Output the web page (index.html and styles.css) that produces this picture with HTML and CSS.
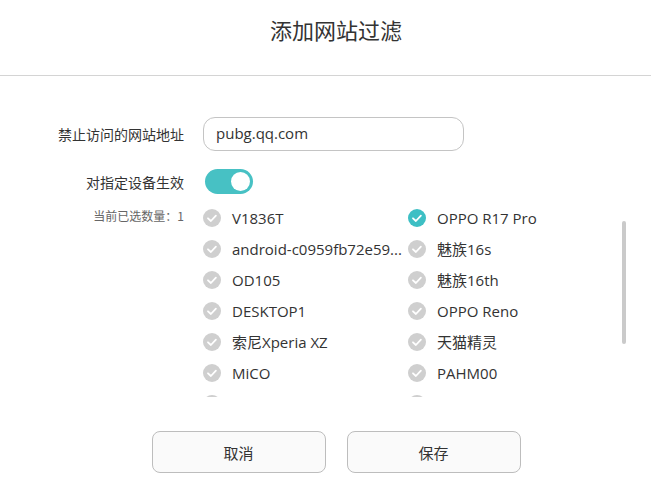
FILE: index.html
```html
<!DOCTYPE html>
<html lang="zh-CN">
<head>
<meta charset="utf-8">
<title>添加网站过滤</title>
<link rel="stylesheet" href="styles.css">
</head>
<body>
<div class="dialog">
  <header class="head"><h1 class="title">添加网站过滤</h1></header>
  <div class="form">
    <label class="label">禁止访问的网站地址</label>
    <div class="field"><div class="input">pubg.qq.com</div></div>

    <label class="label">对指定设备生效</label>
    <div class="field"><span class="switch"><span class="knob"></span></span></div>

    <div class="label small">当前已选数量：1</div>
    <div class="listwrap">
      <div class="list">
        <div class="item"><svg class="chk" viewBox="0 0 18 18"><circle cx="9" cy="9" r="9"/><path d="M5 9.3l2.9 2.7 5-5.4"/></svg><span>V1836T</span></div>
        <div class="item"><svg class="chk on" viewBox="0 0 18 18"><circle cx="9" cy="9" r="9"/><path d="M5 9.3l2.9 2.7 5-5.4"/></svg><span>OPPO R17 Pro</span></div>
        <div class="item"><svg class="chk" viewBox="0 0 18 18"><circle cx="9" cy="9" r="9"/><path d="M5 9.3l2.9 2.7 5-5.4"/></svg><span>android-c0959fb72e59...</span></div>
        <div class="item"><svg class="chk" viewBox="0 0 18 18"><circle cx="9" cy="9" r="9"/><path d="M5 9.3l2.9 2.7 5-5.4"/></svg><span>魅族16s</span></div>
        <div class="item"><svg class="chk" viewBox="0 0 18 18"><circle cx="9" cy="9" r="9"/><path d="M5 9.3l2.9 2.7 5-5.4"/></svg><span>OD105</span></div>
        <div class="item"><svg class="chk" viewBox="0 0 18 18"><circle cx="9" cy="9" r="9"/><path d="M5 9.3l2.9 2.7 5-5.4"/></svg><span>魅族16th</span></div>
        <div class="item"><svg class="chk" viewBox="0 0 18 18"><circle cx="9" cy="9" r="9"/><path d="M5 9.3l2.9 2.7 5-5.4"/></svg><span>DESKTOP1</span></div>
        <div class="item"><svg class="chk" viewBox="0 0 18 18"><circle cx="9" cy="9" r="9"/><path d="M5 9.3l2.9 2.7 5-5.4"/></svg><span>OPPO Reno</span></div>
        <div class="item"><svg class="chk" viewBox="0 0 18 18"><circle cx="9" cy="9" r="9"/><path d="M5 9.3l2.9 2.7 5-5.4"/></svg><span>索尼Xperia XZ</span></div>
        <div class="item"><svg class="chk" viewBox="0 0 18 18"><circle cx="9" cy="9" r="9"/><path d="M5 9.3l2.9 2.7 5-5.4"/></svg><span>天猫精灵</span></div>
        <div class="item"><svg class="chk" viewBox="0 0 18 18"><circle cx="9" cy="9" r="9"/><path d="M5 9.3l2.9 2.7 5-5.4"/></svg><span>MiCO</span></div>
        <div class="item"><svg class="chk" viewBox="0 0 18 18"><circle cx="9" cy="9" r="9"/><path d="M5 9.3l2.9 2.7 5-5.4"/></svg><span>PAHM00</span></div>
        <div class="item"><svg class="chk" viewBox="0 0 18 18"><circle cx="9" cy="9" r="9"/><path d="M5 9.3l2.9 2.7 5-5.4"/></svg></div>
        <div class="item"><svg class="chk" viewBox="0 0 18 18"><circle cx="9" cy="9" r="9"/><path d="M5 9.3l2.9 2.7 5-5.4"/></svg></div>
      </div>
      <div class="thumb"></div>
    </div>
  </div>
  <div class="actions">
    <button class="btn">取消</button>
    <button class="btn">保存</button>
  </div>
</div>
</body>
</html>
```

FILE: styles.css
```css
html, body {
  margin: 0;
  padding: 0;
  background: #fff;
  overflow: hidden;
}
body {
  font-family: "Open Sans", "Noto Sans CJK SC", sans-serif;
  color: #333;
  width: 651px;
  height: 488px;
}
.dialog {
  width: 672px;
}
.head {
  height: 75px;
  width: 672px;
  border-bottom: 1px solid #d4d4d4;
}
.title {
  margin: 0;
  text-align: center;
  font-family: "Noto Sans CJK SC", sans-serif;
  font-weight: 400;
  font-size: 22px;
  line-height: 58px;
  color: #333;
}
.form {
  display: grid;
  grid-template-columns: 184px 1fr;
  column-gap: 19px;
  padding-top: 41px;
  width: 651px;
}
.label {
  text-align: right;
  font-family: "Noto Sans CJK SC", sans-serif;
  font-size: 14px;
  color: #333;
  display: flex;
  align-items: center;
  justify-content: flex-end;
}
.label.small {
  font-size: 12px;
  color: #666;
  align-items: flex-start;
  padding-top: 5px;
  margin-top: 8px;
}
.field {
  display: flex;
  align-items: center;
}
.input {
  box-sizing: border-box;
  width: 261px;
  height: 34px;
  border: 1px solid #c4c4c4;
  border-radius: 12px;
  padding-left: 12px;
  font-size: 15px;
  line-height: 31px;
  color: #333;
}
.form .field:nth-of-type(2) {
  margin-top: 18px;
}
.form .label:nth-of-type(2) {
  margin-top: 18px;
}
.switch {
  margin-left: 2px;
  width: 48px;
  height: 25px;
  border-radius: 13px;
  background: #47c1c4;
  display: flex;
  justify-content: flex-end;
  align-items: center;
  padding-right: 3px;
  box-sizing: border-box;
}
.knob {
  width: 19px;
  height: 19px;
  border-radius: 50%;
  background: #fff;
}
.listwrap {
  position: relative;
  margin-top: 8px;
  height: 195px;
  width: 430px;
}
.list {
  height: 195px;
  overflow: hidden;
  display: grid;
  grid-template-columns: 205px 200px;
  grid-auto-rows: 31px;
}
.item {
  display: flex;
  align-items: center;
  gap: 11px;
  font-size: 15px;
  color: #333;
  white-space: nowrap;
}
.chk {
  width: 18px;
  height: 18px;
  flex: none;
}
.chk circle {
  fill: #cfcfcf;
}
.chk path {
  fill: none;
  stroke: #fff;
  stroke-width: 1.8;
  stroke-linecap: round;
  stroke-linejoin: round;
}
.chk.on circle {
  fill: #3dbfc4;
}
.thumb {
  position: absolute;
  left: 419px;
  top: 19px;
  width: 4px;
  height: 123px;
  border-radius: 2px;
  background: #cacaca;
}
.actions {
  display: flex;
  justify-content: center;
  gap: 21px;
  margin-top: 34px;
  width: 672px;
}
.btn {
  width: 174px;
  height: 42px;
  border: 1px solid #bdbdbd;
  border-radius: 8px;
  background: #fafafa;
  font-family: "Noto Sans CJK SC", sans-serif;
  font-size: 15px;
  color: #333;
  padding: 0;
}
```
